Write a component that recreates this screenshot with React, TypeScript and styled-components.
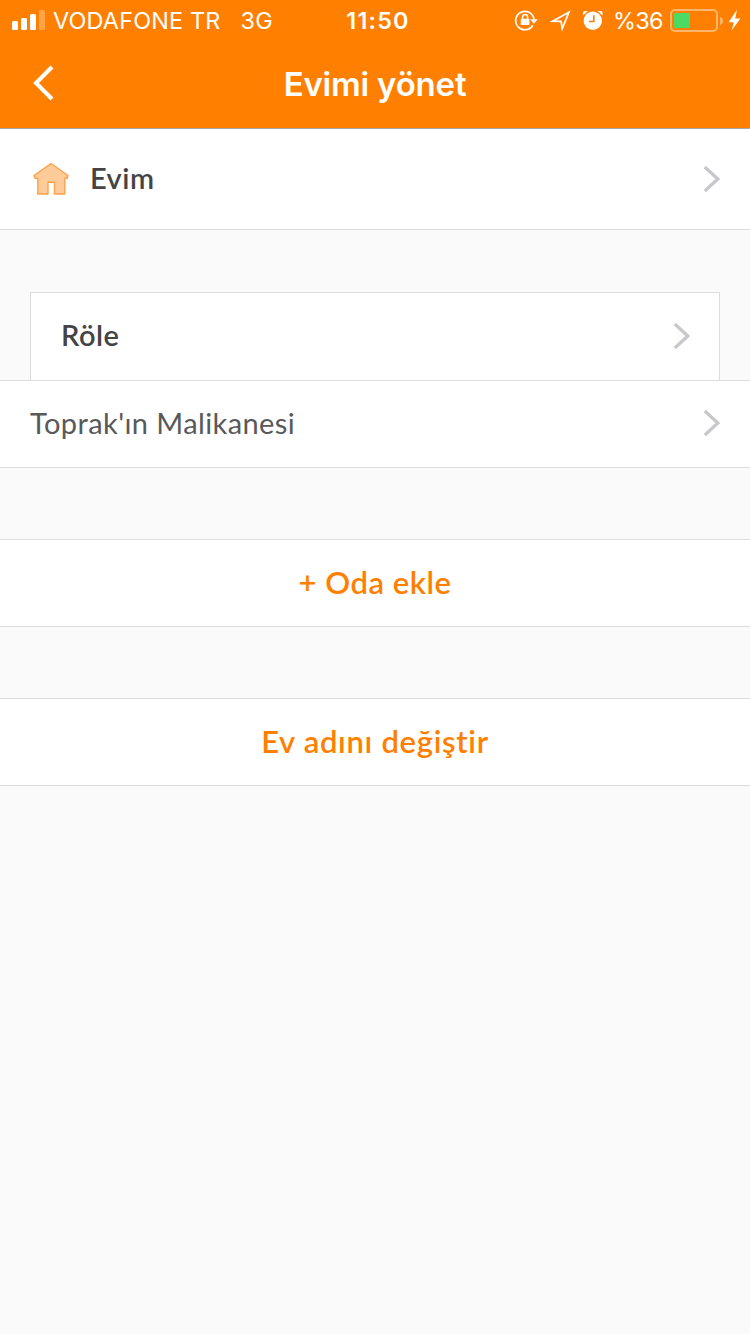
import React from 'react';
import styled, { createGlobalStyle } from 'styled-components';

const GlobalStyle = createGlobalStyle`
  * { box-sizing: border-box; }
  body {
    margin: 0;
    background: #fafafa;
    -webkit-font-smoothing: antialiased;
  }
`;

const Screen = styled.div`
  width: 750px;
  min-height: 1334px;
  background: #fafafa;
  font-family: Lato, 'Open Sans', sans-serif;
`;

const Header = styled.header`
  height: 129px;
  background: #ff8000;
  border-bottom: 1px solid #a8a6a3;
  color: #fff;
  font-family: Inter, sans-serif;
`;

const StatusBar = styled.div`
  display: grid;
  grid-template-columns: 1fr auto 1fr;
  height: 40px;
  padding: 0 9px 0 12px;
  font-size: 23.4px;
  line-height: 41px;
  white-space: nowrap;
`;

const StatusLeft = styled.div`
  display: flex;
  align-items: center;
`;

const StatusRight = styled(StatusLeft)`
  justify-content: flex-end;
`;

const Carrier = styled.span`
  margin-left: 8px;
  letter-spacing: 0.18px;
`;

const Network = styled.span`
  margin-left: 20px;
  letter-spacing: 0.3px;
`;

const Clock = styled.span`
  padding-left: 3px;
  font-weight: 600;
  letter-spacing: 1.2px;
`;

const Percent = styled.span`
  margin: 0 7px 0 9px;
  letter-spacing: -0.6px;
`;

const NavBar = styled.div`
  display: grid;
  grid-template-columns: 100px 1fr 100px;
  align-items: center;
  height: 88px;
`;

const BackButton = styled.button`
  display: flex;
  padding: 0 0 3px 32px;
  border: 0;
  background: none;
  color: inherit;
`;

const Title = styled.h1`
  margin: 0;
  text-align: center;
  font-size: 33px;
  line-height: 40px;
  font-weight: 600;
  letter-spacing: -0.2px;
`;

const Row = styled.div<{ $height: number; $lift?: number }>`
  display: flex;
  align-items: center;
  height: ${(p) => p.$height}px;
  padding: 0 30px ${(p) => p.$lift ?? 0}px;
  background: #fff;
  border-bottom: 1px solid #dcdcdd;
`;

const RoomCard = styled(Row)`
  margin: 62px 30px 0;
  border: solid #dcdcdd;
  border-width: 1px 1px 0;
  padding-right: 29px;
`;

const RoomRow = styled(Row)`
  border-top: 1px solid #dcdcdd;
`;

const Label = styled.span<{ $weight: number; $spacing: number }>`
  flex: 1;
  padding-bottom: ${(p) => (p.$weight > 400 ? 2 : 0)}px;
  font-size: 29px;
  line-height: 36px;
  font-weight: ${(p) => p.$weight};
  letter-spacing: ${(p) => p.$spacing}px;
  color: ${(p) => (p.$weight > 400 ? '#444' : '#595959')};
`;

const ActionButton = styled.button<{ $spacing: number }>`
  display: block;
  width: 100%;
  height: 88px;
  margin: 71px 0 0;
  padding: 0 0 2px;
  border: solid #dcdcdd;
  border-width: 1px 0;
  background: #fff;
  color: #ff8000;
  font-family: inherit;
  font-size: 31px;
  font-weight: 600;
  letter-spacing: ${(p) => p.$spacing}px;
`;

const HomeIcon = styled.svg`
  margin-right: 20px;
`;

const SignalBars = styled.svg`
  margin-bottom: 1px;
`;

const Chevron = () => (
  <svg width="17" height="28" viewBox="0 0 17 28" fill="none" stroke="#c7c7cc" strokeWidth="3.2">
    <path d="M1.8 2 14.8 14 1.8 26" />
  </svg>
);

const Signal = () => (
  <SignalBars width="33" height="20" viewBox="0 0 33 20" fill="#fff">
    <rect x="0" y="11" width="6" height="9" rx="1.5" />
    <rect x="9" y="8" width="6" height="12" rx="1.5" />
    <rect x="18" y="4" width="6" height="16" rx="1.5" />
    <rect x="27" y="0" width="6" height="20" rx="1.5" opacity=".28" />
  </SignalBars>
);

const StatusIcons = () => (
  <svg width="90" height="22" viewBox="0 0 90 22" fill="none" stroke="#fff">
    <path d="M18.8 15.2A9.2 9.2 0 1 1 20 9.5" strokeWidth="1.7" />
    <path d="M16 9.3h7.8L19.9 13.8Z" fill="#fff" stroke="none" />
    <rect x="6.8" y="8.8" width="8.6" height="6.2" rx=".6" fill="#fff" stroke="none" />
    <path d="M8.6 9.5V7a2.5 2.5 0 0 1 5 0V9.5" strokeWidth="1.5" />
    <path d="M38.5 11.2 55 2.2 48.2 18.6 47 11.3Z" strokeWidth="1.7" />
    <circle cx="78.8" cy="10.8" r="9.2" fill="#fff" stroke="none" />
    <path d="M79.8 5.2V11.5H75" stroke="#ff8000" strokeWidth="1.6" />
    <path d="M69 5.5V3Q69 1 71 1H74ZM88.6 5.5V3Q88.6 1 86.6 1H83.6Z" fill="#fff" stroke="none" />
  </svg>
);

const Battery = () => (
  <svg width="71" height="24" viewBox="0 0 71 24" fill="none">
    <rect x="1" y="1" width="46" height="21" rx="4" stroke="#fff" strokeOpacity=".42" strokeWidth="2" />
    <rect x="4" y="4" width="16" height="15" rx="1" fill="#4cd964" />
    <path d="M50 8q3 1.2 3 4t-3 4Z" fill="#fff" fillOpacity=".42" />
    <path d="M67 .8 58.6 13.2h5.2L61.6 21.6 70.4 9.4h-5.2Z" fill="#fff" />
  </svg>
);

export default function App() {
  return (
    <Screen>
      <GlobalStyle />
      <Header>
        <StatusBar>
          <StatusLeft>
            <Signal />
            <Carrier>VODAFONE TR</Carrier>
            <Network>3G</Network>
          </StatusLeft>
          <Clock>11:50</Clock>
          <StatusRight>
            <StatusIcons />
            <Percent>%36</Percent>
            <Battery />
          </StatusRight>
        </StatusBar>
        <NavBar>
          <BackButton aria-label="Geri">
            <svg width="24" height="36" viewBox="0 0 24 36" fill="none" stroke="#fff" strokeWidth="4">
              <path d="M20 2 4 18 20 34" />
            </svg>
          </BackButton>
          <Title>Evimi yönet</Title>
        </NavBar>
      </Header>
      <Row $height={101}>
        <HomeIcon width="40" height="36" viewBox="0 0 40 36">
          <path
            d="M21 2.5 38 14.5 37.2 17.2H34.8V33H24.5V21.3H18V33H7.8V17.2H5L4 14.5Z"
            fill="#ffcc99"
            stroke="#ffa04a"
            strokeWidth="1.4"
            strokeLinejoin="round"
          />
        </HomeIcon>
        <Label $weight={600} $spacing={0.5}>Evim</Label>
        <Chevron />
      </Row>
      <RoomCard $height={88} $lift={2}>
        <Label $weight={600} $spacing={0.5}>Röle</Label>
        <Chevron />
      </RoomCard>
      <RoomRow $height={88} $lift={2}>
        <Label $weight={400} $spacing={0.4}>Toprak'ın Malikanesi</Label>
        <Chevron />
      </RoomRow>
      <ActionButton $spacing={0.5}>+ Oda ekle</ActionButton>
      <ActionButton $spacing={0.7}>Ev adını değiştir</ActionButton>
    </Screen>
  );
}
